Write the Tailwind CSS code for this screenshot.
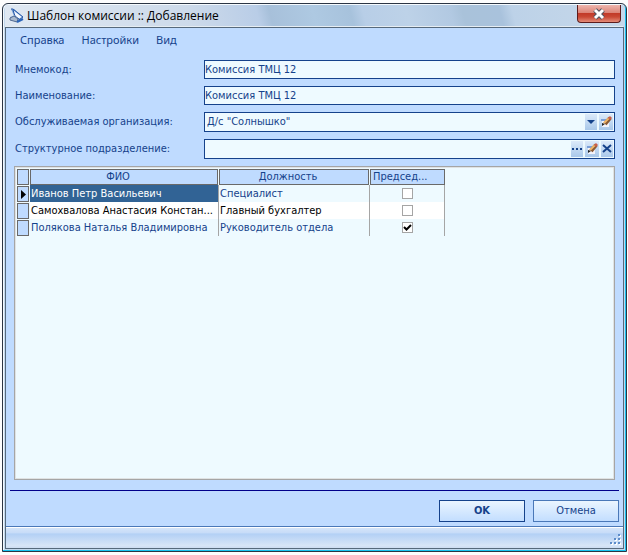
<!DOCTYPE html>
<html lang="ru">
<head>
    <meta charset="UTF-8">
    <meta name="viewport" content="width=device-width, initial-scale=1.0">
    <title>Шаблон комиссии :: Добавление</title>
    <script src="https://cdn.jsdelivr.net/npm/@tailwindcss/browser@4"></script>
</head>
<body class="h-screen bg-[#fdfdfd] pt-[3px] pr-px pb-[3px] pl-[2px] font-['DejaVu_Sans_Condensed','DejaVu_Sans',sans-serif] text-[11px] leading-4 text-[#15428b]">
    <!-- window -->
    <div class="h-full flex flex-col rounded-t-md border border-[#2b3544] bg-[#c3d9ee] shadow-[inset_-1px_-1px_0_#18c4f0,inset_1px_1px_0_#f4f9fd] px-[2px] pb-[2px]">
        <!-- title bar -->
        <header class="h-[22px] mt-px mr-px shrink-0 flex items-center border-b border-[#e6edf2] bg-[linear-gradient(75deg,#dfe8f2_0%,#cddaea_30%,#b9cde7_41%,#a7c0da_43%,#aec9e2_50%,#a7c2dc_56%,#b8cee7_58%,#bdd2e8_65%,#b2c9e2_72%,#a9c2da_74%,#a9c2dc_80%,#bdd2e8_82%,#c6d8ea_100%)]">
            <svg class="ml-1 w-4 h-4" viewBox="0 0 16 16" aria-hidden="true">
                <path d="M2 1L5 1L14 9L9 13L1 12L1 9L5 8Z" fill="#7fa6d8"/>
                <path d="M5 3L13 9L9 11L5 10Z" fill="#f4f9ff"/>
                <path d="M2 1H4L14 9L10 12M4 2L6 8L10 11" fill="none" stroke="#2859a8"/>
                <path d="M1 10L5 8L9 11L8 14L1 12Z" fill="#a9b9cd" stroke="#526b91"/>
                <path d="M8 14L14 11" fill="none" stroke="#2a64b8" stroke-width="2"/>
            </svg>
            <h1 class="ml-[2px] font-['Open_Sans',sans-serif] text-xs leading-4 text-black">Шаблон комиссии :: Добавление</h1>
            <button aria-label="Закрыть" class="ml-auto mr-[2px] self-start w-11 h-[18px] flex items-center justify-center rounded-b-sm border border-t-0 border-[#5c1c1c] bg-[linear-gradient(#eeb5ad,#dc8578_45%,#c23a28_50%,#c94834_70%,#e58c78)]">
                <svg class="w-3 h-3" viewBox="0 0 12 12" aria-hidden="true">
                    <path d="M2 2L10 10M10 2L2 10" stroke="#53545f" stroke-width="5"/>
                    <path d="M2 2L10 10M10 2L2 10" stroke="#fff" stroke-width="3"/>
                </svg>
            </button>
        </header>
        <!-- end of title bar -->
        <!-- client area -->
        <main class="flex-1 min-h-0 flex flex-col border border-[#56697c] bg-[#bfdbff]">
            <nav class="flex items-start gap-[17px] h-8 pl-[14px] pt-1 font-['Noto_Sans',sans-serif]">
                <button>Справка</button>
                <button>Настройки</button>
                <button>Вид</button>
            </nav>
            <!-- fields -->
            <div class="grid grid-cols-[189px_1fr] gap-y-[7px] items-center pl-[9px] pr-2">
                <label for="code">Мнемокод:</label>
                <input id="code" value="Комиссия ТМЦ 12" class="min-w-0 h-[19px] border border-[#15428b] bg-[#eefaff]">
                <label for="name">Наименование:</label>
                <input id="name" value="Комиссия ТМЦ 12" class="min-w-0 h-[19px] border border-[#15428b] bg-[#eefaff]">
                <label for="org">Обслуживаемая организация:</label>
                <div class="flex items-center gap-[2px] h-5 pl-[2px] pr-px border border-[#15428b] bg-[#eefaff]">
                    <div class="flex-1 grid grid-cols-[1fr_12px] items-center">
                        <select id="org" class="col-span-2 col-start-1 row-start-1 appearance-none w-full h-4">
                            <option>Д/с "Солнышко"</option>
                        </select>
                        <svg class="col-start-2 row-start-1 w-3 h-4 pointer-events-none bg-linear-to-b from-[#dceafa] to-[#a9c8ea]" viewBox="0 0 12 16" aria-hidden="true">
                            <path d="M2 6H10L6 10Z" fill="#15428b"/>
                        </svg>
                    </div>
                    <button aria-label="Очистить" class="w-[14px] h-4 bg-linear-to-b from-[#dceafa] to-[#a9c8ea]">
                        <svg class="w-[14px] h-4" viewBox="0 0 14 16" aria-hidden="true">
                            <path d="M3 7H10V13H3Z" fill="#f4f4fb"/>
                            <path d="M2 6H7" stroke="#7a9fd8" stroke-width="2"/>
                            <path d="M11 4L6 10" stroke="#8a5a34" stroke-width="4"/>
                            <path d="M10 4L5 9" stroke="#eeb56a" stroke-width="2"/>
                            <path d="M12 3L10 5" stroke="#c8604c" stroke-width="3"/>
                            <path d="M3 9L6 10L3 12Z" fill="#222"/>
                        </svg>
                    </button>
                </div>
                <label for="unit">Структурное подразделение:</label>
                <div class="flex items-center gap-[2px] h-5 pl-[2px] pr-px border border-[#15428b] bg-[#eefaff]">
                    <input id="unit" class="flex-1 min-w-0 h-4">
                    <button aria-label="Выбрать" class="w-3 h-4 bg-linear-to-b from-[#dceafa] to-[#a9c8ea]">
                        <svg class="w-3 h-4" viewBox="0 0 12 16" aria-hidden="true">
                            <path d="M1 7h2v2h-2zM5 7h2v2h-2zM9 7h2v2h-2z" fill="#15428b"/>
                        </svg>
                    </button>
                    <button aria-label="Очистить" class="w-[14px] h-4 bg-linear-to-b from-[#dceafa] to-[#a9c8ea]">
                        <svg class="w-[14px] h-4" viewBox="0 0 14 16" aria-hidden="true">
                            <path d="M3 7H10V13H3Z" fill="#f4f4fb"/>
                            <path d="M2 6H7" stroke="#7a9fd8" stroke-width="2"/>
                            <path d="M11 4L6 10" stroke="#8a5a34" stroke-width="4"/>
                            <path d="M10 4L5 9" stroke="#eeb56a" stroke-width="2"/>
                            <path d="M12 3L10 5" stroke="#c8604c" stroke-width="3"/>
                            <path d="M3 9L6 10L3 12Z" fill="#222"/>
                        </svg>
                    </button>
                    <button aria-label="Удалить" class="w-3 h-4 bg-linear-to-b from-[#dceafa] to-[#a9c8ea]">
                        <svg class="w-3 h-4" viewBox="0 0 12 16" aria-hidden="true">
                            <path d="M2 4L10 11M10 4L2 11" stroke="#15428b" stroke-width="2"/>
                        </svg>
                    </button>
                </div>
            </div>
            <!-- end of fields -->
            <!-- members -->
            <div class="flex-1 min-h-0 mx-2 mt-[7px] border border-[#a5a5a5] bg-[#eefaff] p-px overflow-hidden shadow-[inset_0_0_0_1px_#dfe2e3]">
                <table class="table-fixed w-[428px] mt-px ml-px border-separate border-spacing-0 leading-[14px]">
                    <colgroup>
                        <col class="w-[13px]">
                        <col class="w-[189px]">
                        <col class="w-[151px]">
                        <col class="w-[75px]">
                    </colgroup>
                    <thead>
                        <tr class="h-4">
                            <th class="p-0 pr-px"><div class="h-4 border border-[#696969] bg-[#bfdbff]"></div></th>
                            <th class="p-0 pr-px font-normal"><div class="h-4 pr-3 border border-[#696969] bg-[#bfdbff]">ФИО</div></th>
                            <th class="p-0 pr-px font-normal"><div class="h-4 pr-3 border border-[#696969] bg-[#bfdbff]">Должность</div></th>
                            <th class="p-0 font-normal text-left"><div class="h-4 px-[2px] border border-[#696969] bg-[#bfdbff]">Председ...</div></th>
                        </tr>
                    </thead>
                    <tbody>
                        <tr class="h-[17px]">
                            <td class="p-0 pr-px pt-px">
                                <div class="h-4 flex items-center justify-center border border-[#696969] bg-[#bfdbff]">
                                    <svg class="w-[5px] h-[9px]" viewBox="0 0 5 9" aria-hidden="true"><path d="M0 0L5 4.5L0 9Z" fill="#000"/></svg>
                                </div>
                            </td>
                            <td class="p-0 px-px border-r border-[#a5a5a5] bg-[#316395] text-white whitespace-nowrap">Иванов Петр Васильевич</td>
                            <td class="p-0 px-px border-r border-[#a5a5a5] whitespace-nowrap">Специалист</td>
                            <td class="p-0 border-r border-[#a5a5a5]">
                                <input type="checkbox" aria-label="Председатель: Иванов" class="block mx-auto appearance-none size-[11px] border border-[#a5a5a5] bg-white">
                            </td>
                        </tr>
                        <tr class="h-[17px] bg-white text-black">
                            <td class="p-0 pr-px pt-px bg-[#eefaff]"><div class="h-4 border border-[#696969] bg-[#bfdbff]"></div></td>
                            <td class="p-0 px-px border-r border-[#a5a5a5] whitespace-nowrap">Самохвалова Анастасия Констан...</td>
                            <td class="p-0 px-px border-r border-[#a5a5a5] whitespace-nowrap">Главный бухгалтер</td>
                            <td class="p-0 border-r border-[#a5a5a5]">
                                <input type="checkbox" aria-label="Председатель: Самохвалова" class="block mx-auto appearance-none size-[11px] border border-[#a5a5a5] bg-white">
                            </td>
                        </tr>
                        <tr class="h-[17px]">
                            <td class="p-0 pr-px pt-px"><div class="h-4 border border-[#696969] bg-[#bfdbff]"></div></td>
                            <td class="p-0 px-px border-r border-[#a5a5a5] whitespace-nowrap">Полякова Наталья Владимировна</td>
                            <td class="p-0 px-px border-r border-[#a5a5a5] whitespace-nowrap">Руководитель отдела</td>
                            <td class="p-0 border-r border-[#a5a5a5]">
                                <div class="grid size-[11px] mx-auto">
                                    <input type="checkbox" checked aria-label="Председатель: Полякова" class="col-start-1 row-start-1 appearance-none size-[11px] border border-[#a5a5a5] bg-white">
                                    <svg class="col-start-1 row-start-1 size-[11px] pointer-events-none" viewBox="0 0 11 11" aria-hidden="true"><path d="M2 5L4.500 7.500L9 3" fill="none" stroke="#000" stroke-width="2"/></svg>
                                </div>
                            </td>
                        </tr>
                    </tbody>
                </table>
            </div>
            <!-- end of members -->
            <hr class="mx-1 mt-[10px] border-0 h-px shrink-0 bg-[#00008b]">
            <div class="flex justify-end gap-2 mt-[9px] mb-1 mr-1">
                <button class="w-[86px] h-[22px] border border-[#15428b] bg-linear-to-b from-[#eaf5ff] to-[#c3deff] font-bold">OK</button>
                <button class="w-[86px] h-[22px] border border-[#4a78b8] bg-linear-to-b from-[#eaf5ff] to-[#c3deff]">Отмена</button>
            </div>
            <!-- status bar -->
            <footer class="h-[22px] shrink-0 flex items-end justify-end pr-[2px] pb-[3px] border-t border-[#4a78b8] shadow-[inset_0_1px_0_#fff] bg-[linear-gradient(#d7e6f9,#c7dcf8_28%,#b3d0f5_33%,#d7e5f7_88%,#cdddf2)]">
                <svg class="w-3 h-3" viewBox="0 0 12 12" aria-hidden="true">
                    <path d="M10 2h2v2h-2zM6 6h2v2h-2zM10 6h2v2h-2zM2 10h2v2h-2zM6 10h2v2h-2zM10 10h2v2h-2z" fill="#fff"/>
                    <path d="M9 1h2v2h-2zM5 5h2v2h-2zM9 5h2v2h-2zM1 9h2v2h-2zM5 9h2v2h-2zM9 9h2v2h-2z" fill="#5d8cc9"/>
                </svg>
            </footer>
        </main>
        <!-- end of client area -->
    </div>
    <!-- end of window -->
</body>
</html>
